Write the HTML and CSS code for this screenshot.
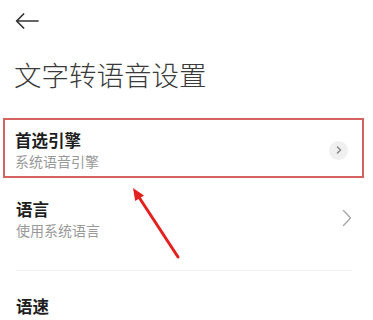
FILE: index.html
```html
<!DOCTYPE html>
<html lang="zh-CN">
<head>
<meta charset="utf-8">
<link rel="stylesheet" href="styles.css">
</head>
<body>
<div class="page">
  <div class="topbar">
    <svg class="back" width="24" height="16" viewBox="0 0 24 16"><path d="M23 8H1.8M8.6 1L1.6 8L8.6 15" fill="none" stroke="#333" stroke-width="1.7" stroke-linecap="round" stroke-linejoin="round"/></svg>
  </div>
  <h1 class="title">文字转语音设置</h1>
  <div class="item highlight">
    <div class="texts">
      <div class="item-title">首选引擎</div>
      <div class="item-sub">系统语音引擎</div>
    </div>
    <span class="circle"><svg width="8" height="10" viewBox="0 0 8 10"><path d="M2.5 2L5.5 5L2.5 8" fill="none" stroke="#8a8a8a" stroke-width="1.6" stroke-linecap="round" stroke-linejoin="round"/></svg></span>
  </div>
  <div class="item second">
    <div class="texts">
      <div class="item-title">语言</div>
      <div class="item-sub">使用系统语言</div>
    </div>
    <svg class="chev" width="10" height="18" viewBox="0 0 10 18"><path d="M1.5 1.5L8.5 9L1.5 16.5" fill="none" stroke="#a6a6a6" stroke-width="1.3" stroke-linecap="round" stroke-linejoin="round"/></svg>
  </div>
  <div class="divider"></div>
  <div class="item third">
    <div class="texts">
      <div class="item-title">语速</div>
    </div>
  </div>
  <svg class="annot" width="373" height="320" viewBox="0 0 373 320"><line x1="178" y1="257" x2="139.5" y2="198" stroke="#e3211f" stroke-width="3" stroke-linecap="round"/><polygon points="133,188 144,195.6 135.2,201" fill="#e3211f"/></svg>
</div>
</body>
</html>
```

FILE: styles.css
```css
html, body {
  margin: 0;
  padding: 0;
  background: #fff;
}
body {
  font-family: "Noto Sans CJK SC", "Noto Sans", sans-serif;
  color: #222;
}
.page {
  position: relative;
  width: 373px;
  height: 320px;
  overflow: hidden;
  display: flex;
  flex-direction: column;
}
.topbar {
  height: 42px;
  display: flex;
  align-items: center;
  padding-left: 15px;
}
.back {
  display: block;
}
.title {
  margin: 12px 0 24px 0;
  padding-left: 14px;
  font-size: 27.5px;
  line-height: 40px;
  height: 40px;
  font-weight: 300;
  color: #3a3a3a;
  letter-spacing: 0;
}
.item {
  display: flex;
  align-items: center;
  justify-content: space-between;
}
.texts {
  display: flex;
  flex-direction: column;
}
.item-title {
  font-size: 16.5px;
  line-height: 22px;
  font-weight: 700;
  color: #1e1e1e;
}
.item-sub {
  font-size: 14px;
  line-height: 20px;
  color: #9a9a9a;
}
.highlight {
  margin: 0 9px 0 3px;
  border: 2px solid #d4625f;
  padding: 9px 14px 5px 10px;
  height: 42px;
}
.circle {
  width: 19px;
  height: 19px;
  border-radius: 50%;
  background: #f0f0f0;
  display: flex;
  align-items: center;
  justify-content: center;
}
.second {
  padding: 20px 21px 30px 16px;
  height: 42px;
}
.chev {
  display: block;
  margin-top: -2px;
}
.divider {
  height: 1px;
  background: #efefef;
  margin: 0 21px 0 16px;
}
.third {
  padding: 24px 21px 0 16px;
}
.annot {
  position: absolute;
  left: 0;
  top: 0;
  pointer-events: none;
}
```
